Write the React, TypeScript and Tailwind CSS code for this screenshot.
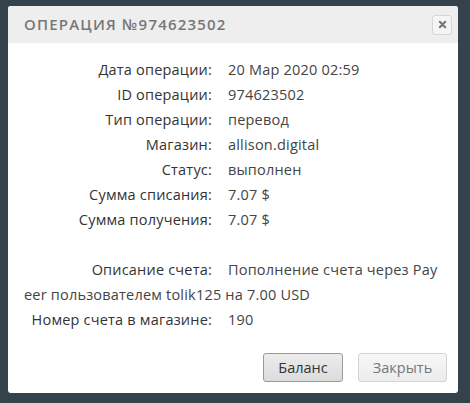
const ROWS: [string, string][] = [
  ["Дата операции:", "20 Мар 2020 02:59"],
  ["ID операции:", "974623502"],
  ["Тип операции:", "перевод"],
  ["Магазин:", "allison.digital"],
  ["Статус:", "выполнен"],
  ["Сумма списания:", "7.07 $"],
  ["Сумма получения:", "7.07 $"],
];

function Row({ label, value }: { label: string; value: string }) {
  return (
    <div className="leading-[25px]">
      <span className="inline-block w-[204px] pr-[16px] text-right text-[#333]">{label}</span>
      <span className="text-[#444]">{value}</span>
    </div>
  );
}

export default function App() {
  return (
    <div
      className="h-[403px] w-[470px] bg-[#34434b] pt-[6px] pl-[8px]"
      style={{ fontFamily: '"Open Sans", "Liberation Sans", sans-serif' }}
    >
      <div className="w-[450px] overflow-hidden rounded-[3px] bg-white">
        <div className="flex h-[37px] items-center justify-between bg-[#eeeeee] pl-[16px] pr-[6px]">
          <h1 className="text-[15px] font-semibold uppercase tracking-[1.2px] text-[#777]">
            Операция №974623502
          </h1>
          <button
            type="button"
            className="flex h-[20px] w-[20px] items-center justify-center rounded-[3px] border border-[#d6d6d6] bg-[#f4f4f4] text-[#777]"
          >
            <svg width="9" height="9" viewBox="0 0 10 10">
              <path d="M2 2 L8 8 M8 2 L2 8" stroke="currentColor" strokeWidth="2.4" strokeLinecap="round" />
            </svg>
          </button>
        </div>

        <div className="px-[16px] pt-[14px] text-[14.5px] tracking-[0.2px]">
          {ROWS.map(([l, v]) => (
            <Row key={l} label={l} value={v} />
          ))}
          <div className="h-[25px]" />
          <div className="leading-[25px] break-all">
            <span className="inline-block w-[204px] pr-[16px] text-right text-[#333] break-normal">Описание счета:</span>
            <span className="text-[#444]">
              Пополнение счета через Payeer пользователем tolik125 на 7.00 USD
            </span>
          </div>
          <Row label="Номер счета в магазине:" value="190" />
        </div>

        <div className="flex justify-end gap-[15px] px-[11px] pt-[21px] pb-[11px] text-[14.5px]">
          <button
            type="button"
            className="h-[29px] w-[80px] rounded-[3px] border border-[#9a9a9a] bg-gradient-to-b from-[#ececec] to-[#dcdcdc] text-[#333]"
          >
            Баланс
          </button>
          <button
            type="button"
            className="h-[29px] w-[89px] rounded-[3px] border border-[#d4d4d4] bg-gradient-to-b from-[#f7f7f7] to-[#ececec] text-[#777]"
          >
            Закрыть
          </button>
        </div>
      </div>
    </div>
  );
}
